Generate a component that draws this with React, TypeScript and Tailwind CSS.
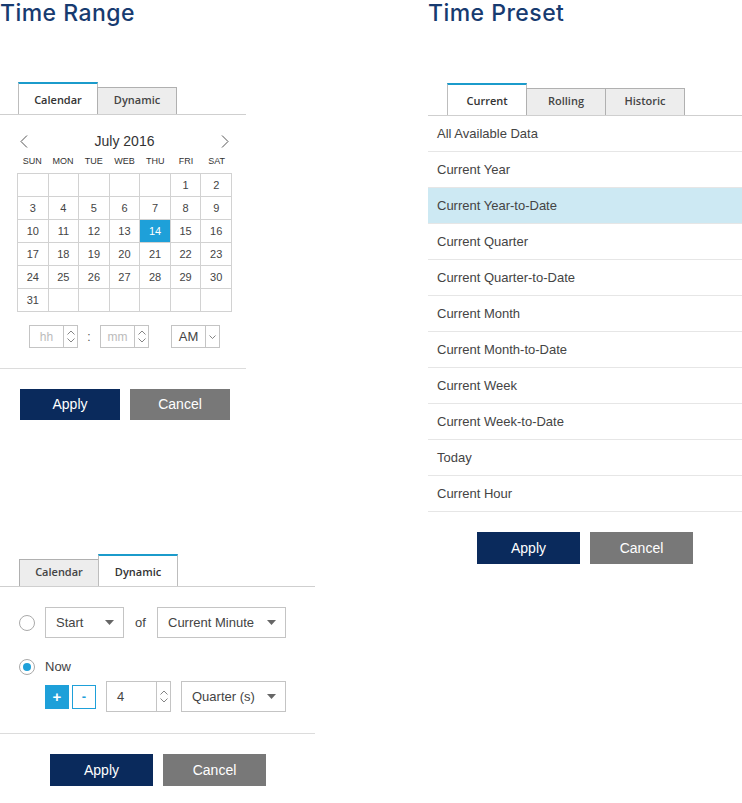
import { ReactNode } from 'react';

const body = { fontFamily: '"Liberation Sans", Arial, sans-serif' };

const Title = ({ children }: { children: ReactNode }) => (
  <h1 className="text-[23px] leading-[26px] font-medium tracking-[0.02em] text-[#173b70]" style={{ fontFamily: 'Inter, sans-serif' }}>
    {children}
  </h1>
);

const Tabs = ({ labels, active, width, pad }: { labels: string[]; active: number; width: string; pad: string }) => (
  <div className={`flex items-end border-b border-[#cfcfcf] ${width} ${pad}`} style={{ fontFamily: '"Open Sans", sans-serif' }}>
    {labels.map((l, i) =>
      i === active ? (
        <div key={l} className="-ml-px first:ml-0 flex h-[32px] w-[80px] items-end justify-center border-x border-t-2 border-x-[#bdbdbd] border-t-[#1b9bcb] bg-white pb-[6px] text-[11px] font-semibold text-[#333]">
          {l}
        </div>
      ) : (
        <div key={l} className="-ml-px first:ml-0 flex h-[27px] w-[80px] items-end justify-center border-x border-t border-[#b0b0b0] bg-[#ededed] pb-[6px] text-[11px] font-semibold text-[#444]">
          {l}
        </div>
      )
    )}
  </div>
);

const Btns = ({ w, h }: { w: string; h: string }) => (
  <>
    <button className={`${w} ${h} bg-[#0a2a5c] text-[14px] text-white`}>Apply</button>
    <button className={`${w} ${h} bg-[#787878] text-[14px] text-white`}>Cancel</button>
  </>
);

const Spin = () => (
  <div className="flex h-full w-[14px] flex-col items-center justify-center gap-[3px] border-l border-[#c4c4c4]">
    <svg width="8" height="5" viewBox="0 0 8 5"><path d="M0.5 4.5 L4 1 L7.5 4.5" fill="none" stroke="#777" strokeWidth="0.9" /></svg>
    <svg width="8" height="5" viewBox="0 0 8 5"><path d="M0.5 0.5 L4 4 L7.5 0.5" fill="none" stroke="#777" strokeWidth="0.9" /></svg>
  </div>
);

const Caret = () => (
  <svg width="9" height="5" viewBox="0 0 9 5"><path d="M0 0 H9 L4.5 5 Z" fill="#666" /></svg>
);

const Select = ({ label, w }: { label: string; w: string }) => (
  <div className={`flex h-[31px] ${w} items-center justify-between border border-[#c4c4c4] pl-[10px] pr-[9px] text-[13px] text-[#444]`}>
    <span>{label}</span>
    <Caret />
  </div>
);

const Chev = ({ dir }: { dir: 'l' | 'r' }) => (
  <svg width="8" height="13" viewBox="0 0 8 13">
    <path d={dir === 'l' ? 'M7 0.5 L1 6.5 L7 12.5' : 'M1 0.5 L7 6.5 L1 12.5'} fill="none" stroke="#555" strokeWidth="1" />
  </svg>
);

const days = ['SUN', 'MON', 'TUE', 'WEB', 'THU', 'FRI', 'SAT'];
const cells: (number | null)[] = [null, null, null, null, null, ...Array.from({ length: 31 }, (_, i) => i + 1)];
while (cells.length < 42) cells.push(null);

const presets = [
  'All Available Data',
  'Current Year',
  'Current Year-to-Date',
  'Current Quarter',
  'Current Quarter-to-Date',
  'Current Month',
  'Current Month-to-Date',
  'Current Week',
  'Current Week-to-Date',
  'Today',
  'Current Hour',
];

export default function App() {
  return (
    <div className="flex h-[803px] w-[742px] overflow-hidden bg-white" style={body}>
      {/* Left column */}
      <div className="flex w-[428px] flex-col">
        <Title>Time Range</Title>

        <div className="mt-[56px]">
          <Tabs labels={['Calendar', 'Dynamic']} active={0} width="w-[246px]" pad="pl-[18px]" />
        </div>

        {/* Calendar */}
        <div className="ml-[17px] w-[215px]">
          <div className="mt-[16px] flex h-[20px] items-center justify-between px-[3px]">
            <Chev dir="l" />
            <span className="text-[14px] text-[#333]">July 2016</span>
            <Chev dir="r" />
          </div>
          <div className="mt-[4px] grid h-[14px] grid-cols-7 items-center text-center text-[9px] text-[#333]">
            {days.map(d => (
              <span key={d}>{d}</span>
            ))}
          </div>
          <div className="mt-[4px] grid grid-cols-7 border-l border-t border-[#d2d2d2]">
            {cells.map((c, i) => (
              <div
                key={i}
                className={`flex h-[23px] items-center justify-center border-b border-r border-[#d2d2d2] text-[11px] ${
                  c === 14 ? 'bg-[#1ea0d9] text-white' : 'text-[#444]'
                }`}
              >
                {c ?? ''}
              </div>
            ))}
          </div>
        </div>

        <div className="ml-[29px] mt-[13px] flex h-[23px] items-center">
          <div className="flex h-full w-[49px] items-center border border-[#c4c4c4]">
            <span className="flex-1 text-center text-[12px] text-[#bbb]">hh</span>
            <Spin />
          </div>
          <span className="w-[22px] text-center text-[12px] text-[#555]">:</span>
          <div className="flex h-full w-[49px] items-center border border-[#c4c4c4]">
            <span className="flex-1 text-center text-[12px] text-[#bbb]">mm</span>
            <Spin />
          </div>
          <div className="ml-[22px] flex h-full w-[49px] items-center border border-[#c4c4c4]">
            <span className="flex-1 text-center text-[13px] text-[#444]">AM</span>
            <div className="flex h-full w-[14px] items-center justify-center border-l border-[#c4c4c4]">
              <svg width="7" height="4" viewBox="0 0 7 4"><path d="M0.5 0.5 L3.5 3.5 L6.5 0.5" fill="none" stroke="#777" strokeWidth="0.9" /></svg>
            </div>
          </div>
        </div>

        <div className="mt-[20px] h-px w-[246px] bg-[#dcdcdc]" />

        <div className="ml-[20px] mt-[20px] flex gap-[10px]">
          <Btns w="w-[100px]" h="h-[31px]" />
        </div>

        {/* Dynamic */}
        <div className="mt-[134px]">
          <Tabs labels={['Calendar', 'Dynamic']} active={1} width="w-[315px]" pad="pl-[19px]" />
        </div>

        <div className="mt-[20px] flex h-[31px] items-center text-[13px] text-[#444]">
          <span className="ml-[19px] h-4 w-4 rounded-full border border-[#aaa]" />
          <div className="ml-[10px]">
            <Select label="Start" w="w-[79px]" />
          </div>
          <span className="ml-[11px] w-[11px]">of</span>
          <div className="ml-[11px]">
            <Select label="Current Minute" w="w-[129px]" />
          </div>
        </div>

        <div className="mt-[21px] flex h-4 items-center text-[13px] text-[#444]">
          <span className="ml-[19px] flex h-4 w-4 items-center justify-center rounded-full border border-[#aaa]">
            <span className="h-[8px] w-[8px] rounded-full bg-[#1ea0d9]" />
          </span>
          <span className="ml-[10px]">Now</span>
        </div>

        <div className="mt-[6px] flex h-[31px] items-center">
          <button className="ml-[45px] flex h-[24px] w-[24px] items-center justify-center bg-[#1ea0d9] text-[15px] font-bold leading-none text-white">+</button>
          <button className="ml-[3px] flex h-[24px] w-[24px] items-center justify-center border border-[#1ea0d9] bg-white text-[13px] font-bold leading-none text-[#1ea0d9]">-</button>
          <div className="ml-[10px] flex h-[31px] w-[65px] items-center border border-[#c4c4c4]">
            <span className="flex-1 pl-[10px] text-[13px] text-[#444]">4</span>
            <div className="h-full">
              <Spin />
            </div>
          </div>
          <div className="ml-[10px]">
            <Select label="Quarter (s)" w="w-[105px]" />
          </div>
        </div>

        <div className="mt-[21px] h-px w-[315px] bg-[#dcdcdc]" />

        <div className="ml-[50px] mt-[20px] flex gap-[10px]">
          <Btns w="w-[103px]" h="h-[32px]" />
        </div>
      </div>

      {/* Right column */}
      <div className="flex w-[314px] flex-col">
        <Title>Time Preset</Title>

        <div className="mt-[57px]">
          <Tabs labels={['Current', 'Rolling', 'Historic']} active={0} width="w-full" pad="pl-[19px]" />
        </div>

        <ul>
          {presets.map((p, i) => (
            <li
              key={p}
              className={`flex h-[36px] items-center border-b border-[#e6e6e6] pl-[9px] text-[13px] text-[#444] ${
                i === 2 ? 'bg-[#cde9f3]' : ''
              }`}
            >
              {p}
            </li>
          ))}
        </ul>

        <div className="mt-[20px] flex justify-center gap-[10px]">
          <Btns w="w-[103px]" h="h-[32px]" />
        </div>
      </div>
    </div>
  );
}
